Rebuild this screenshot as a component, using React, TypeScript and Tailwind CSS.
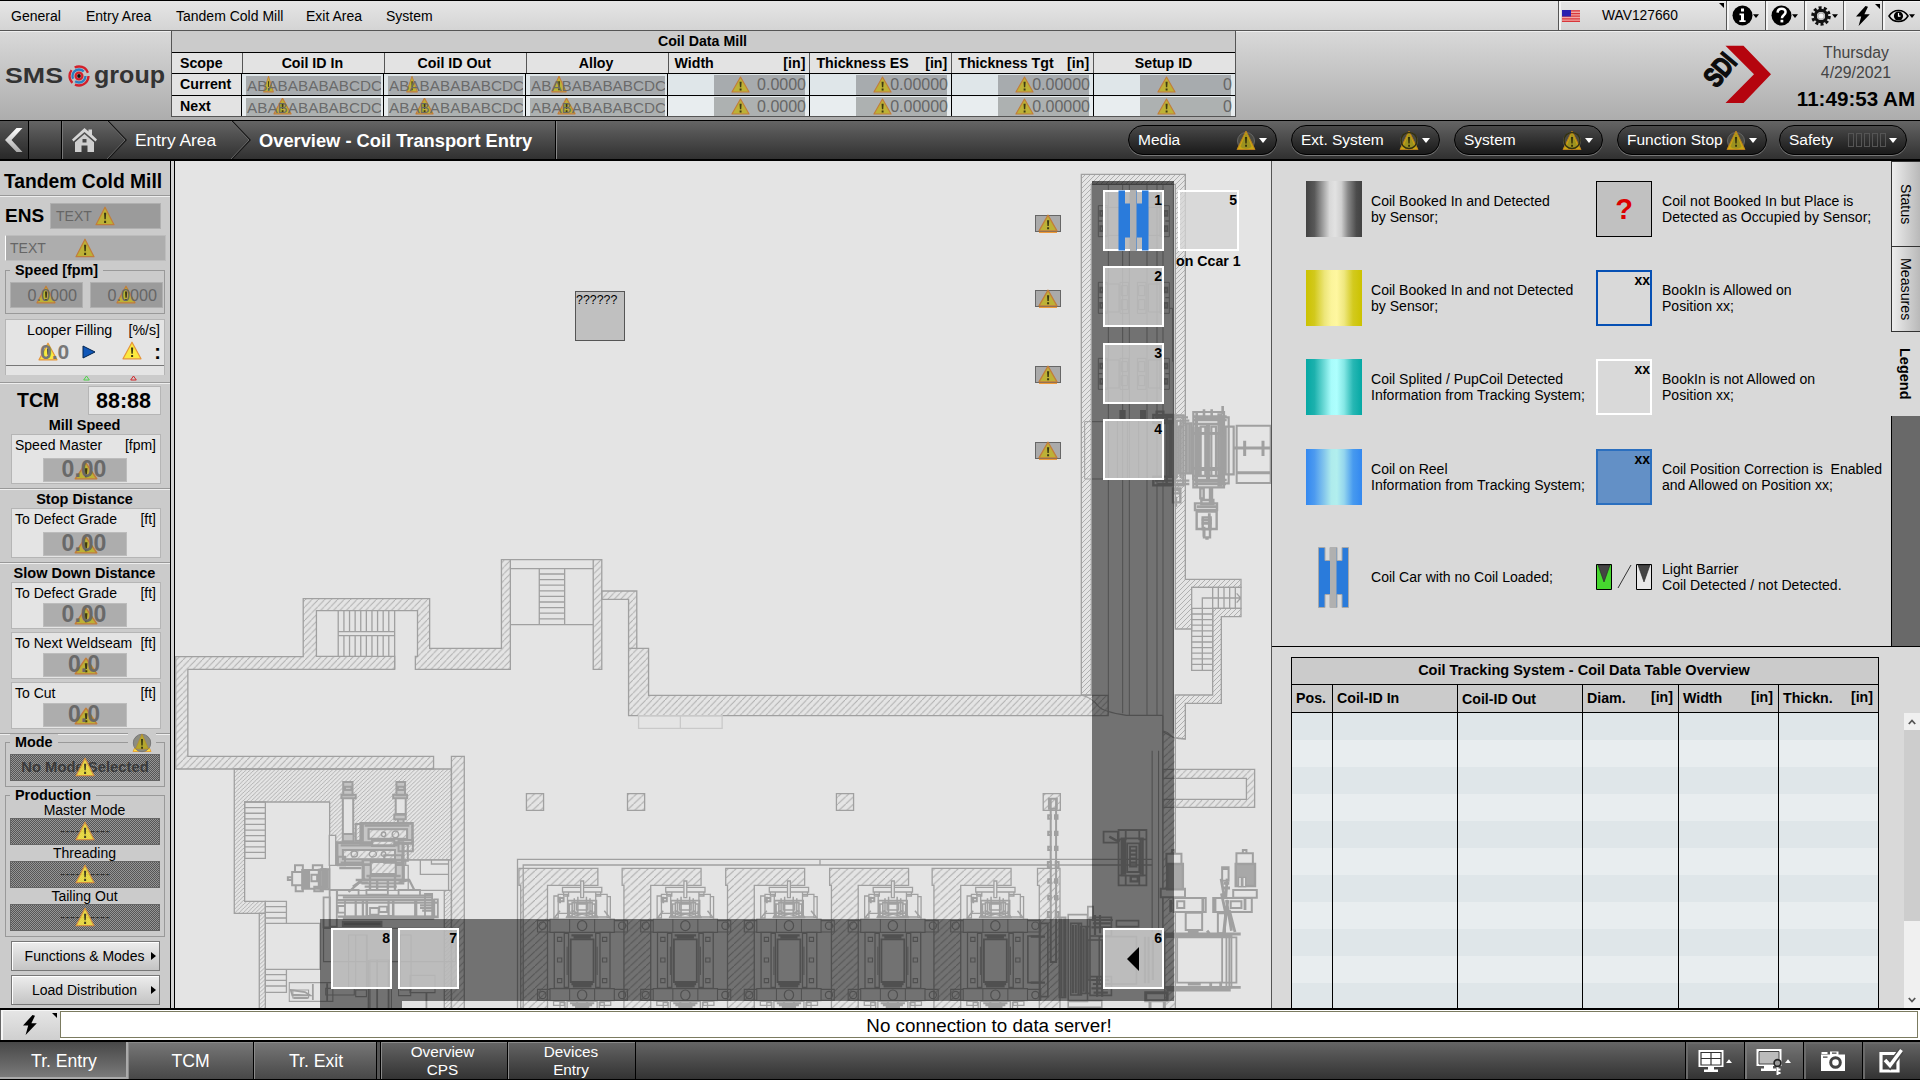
import type { ReactNode } from 'react';
import clsx from 'clsx';

/* ---------- small shared pieces ---------- */

type Tone = 'bright' | 'muted';

const toneFill: Record<Tone, string> = { bright: '#fbe93f', muted: '#bdb136' };
const toneStroke: Record<Tone, string> = { bright: '#e5953a', muted: '#c27d3a' };

function Warn({ w = 19, h = 19, tone = 'muted', className }: { w?: number; h?: number; tone?: Tone; className?: string }) {
  return (
    <svg width={w} height={h} viewBox="0 0 20 19" preserveAspectRatio="none" className={clsx('shrink-0', className)}>
      <path d="M10 1.2L19 17.8H1Z" fill={toneFill[tone]} stroke={toneStroke[tone]} strokeWidth="1.2" strokeLinejoin="round" />
      <path d="M9 6.5h2.2l-.4 6.2H9.4zM9.1 14h2v2.1h-2z" fill="#3d3a12" />
    </svg>
  );
}

/** Places a warning mark over or behind a value. */
function Over({ left, top, children }: { left: number; top: number; children: ReactNode }) {
  return (
    <span className="absolute" style={{ left, top }}>
      {children}
    </span>
  );
}

function Bolt({ className }: { className?: string }) {
  return (
    <svg width="18" height="22" viewBox="0 0 18 22" className={className}>
      <path d="M11.5 1L2 11.5h5.2L4.6 21 15.8 9.2h-5.4L14 1.8z" fill="#000" />
    </svg>
  );
}

function CornerMark({ className }: { className?: string }) {
  return (
    <svg width="5" height="5" viewBox="0 0 5 5" className={clsx('absolute', className)}>
      <path d="M0 0h5v5z" fill="#000" />
    </svg>
  );
}

function Caret({ up, small, color = '#fff' }: { up?: boolean; small?: boolean; color?: string }) {
  return (
    <svg width={small ? 6 : 8} height={small ? 4 : 5} viewBox="0 0 8 5" className="shrink-0">
      <path d={up ? 'M4 0L8 5H0z' : 'M0 0h8L4 5z'} fill={color} />
    </svg>
  );
}

/* ---------- top menu ---------- */

function ToolButton({ children, caret = true, last }: { children: ReactNode; caret?: boolean; last?: boolean }) {
  return (
    <div
      className={clsx(
        'relative flex h-full items-center justify-center border-l border-[#555] pr-px shadow-[inset_2px_1px_0_#f4f4f4]',
        last ? 'w-[38px]' : 'w-[39px]',
      )}
    >
      {children}
      {caret ? <Caret small color="#000" /> : <CornerMark className="right-[2px] top-[3px]" />}
    </div>
  );
}

function MenuBar() {
  return (
    <div className="flex h-[31px] shrink-0 items-center border-b border-t border-b-[#555] border-t-black bg-gradient-to-b from-[#e6e6e6] to-[#d4d4d4] text-[14px]">
      <div className="flex pt-px">
        <span className="ml-[11px] w-[75px]">General</span>
        <span className="w-[90px]">Entry Area</span>
        <span className="w-[130px]">Tandem Cold Mill</span>
        <span className="w-[80px]">Exit Area</span>
        <span>System</span>
      </div>
      <div className="ml-auto flex h-full">
        <div className="relative flex h-full w-[168px] items-center border-l border-[#555] shadow-[inset_2px_1px_0_#f4f4f4]">
          <svg width="18" height="12" viewBox="0 0 18 12" className="ml-[3px] mt-px">
            <rect width="18" height="12" fill="#f0a8a4" />
            <path d="M0 .8h18M0 3.6h18M0 6.2h18M0 8.8h18M0 11.4h18" stroke="#d8363a" strokeWidth="1.2" />
            <rect width="9" height="6.5" fill="#2a20b0" />
          </svg>
          <span className="ml-[22px] pt-px text-[13.800px]">WAV127660</span>
          <CornerMark className="right-[2px] top-[2px]" />
        </div>
        <ToolButton>
          <svg width="21" height="21" viewBox="0 0 21 21">
            <circle cx="10.5" cy="10.5" r="10" fill="#000" />
            <path d="M9 3.6h3v3H9zM7.5 8.4H12v6.8h1.6v1.8H7.4v-1.8H9v-5H7.5z" fill="#fff" />
          </svg>
        </ToolButton>
        <ToolButton>
          <svg width="21" height="21" viewBox="0 0 21 21">
            <circle cx="10.5" cy="10.5" r="10" fill="#000" />
            <path d="M6.6 7.6c.2-5 8-5 8-.6 0 2.900-3.700 3-3.700 6.200" fill="none" stroke="#fff" strokeWidth="2.500" />
            <rect x="9.500" y="14.800" width="2.800" height="2.600" fill="#fff" />
          </svg>
        </ToolButton>
        <ToolButton>
          <svg width="22" height="20" viewBox="0 0 22 20">
            <circle cx="11" cy="10" r="8.300" fill="none" stroke="#111" strokeWidth="3" strokeDasharray="3 2.210" />
            <circle cx="11" cy="10" r="5.700" fill="#f2f2f2" stroke="#111" strokeWidth="3.200" />
            <circle cx="11" cy="10" r="3.200" fill="none" stroke="#aaa" strokeWidth="1.200" />
          </svg>
        </ToolButton>
        <ToolButton caret={false}>
          <Bolt />
        </ToolButton>
        <ToolButton last>
          <svg width="21" height="14" viewBox="0 0 21 14">
            <path d="M1 7c4.500-7.400 14.500-7.400 19 0-4.500 7.400-14.500 7.400-19 0z" fill="#e6e6e6" stroke="#000" strokeWidth="1.500" />
            <circle cx="10.500" cy="7" r="4.600" fill="#000" />
            <path d="M10.500 4v3.200h2" stroke="#fff" strokeWidth="1.200" fill="none" />
          </svg>
        </ToolButton>
      </div>
    </div>
  );
}

/* ---------- header ---------- */

const codeText = 'ABABABABABCDCD';

function CodeCell({ even, mark, markW }: { even: boolean; mark: number; markW: number }) {
  return (
    <div className={clsx('flex w-[142px] border-r border-black pl-[4px] pt-[2px]', even ? 'bg-[#e8edef]' : 'bg-[#dfe6e9]')}>
      <div className={clsx('relative h-full w-[135px] overflow-hidden whitespace-nowrap pl-px', even ? 'bg-[#adb1b1]' : 'bg-[#a7abae]')}>
        <Over left={mark} top={-1}>
          <Warn w={markW} h={18} />
        </Over>
        <span className="relative text-[15.300px] leading-[19px] text-[#666]/95">{codeText}</span>
      </div>
    </div>
  );
}

function NumCell({ even, value, last }: { even: boolean; value: string; last?: boolean }) {
  return (
    <div className={clsx('flex justify-end pr-[4px] pt-px', last ? 'w-[141px]' : 'w-[142px] border-r border-black', even ? 'bg-[#e8edef]' : 'bg-[#dfe6e9]')}>
      <div className={clsx('relative h-full w-[91px] text-right', even ? 'bg-[#adb1b1]' : 'bg-[#a7abae]')}>
        <Over left={17} top={1}>
          <Warn w={19} h={17} />
        </Over>
        <span className="relative left-px text-[16px] leading-[20px] text-[#666]">{value}</span>
      </div>
    </div>
  );
}

const numericHeads: [string, string][] = [
  ['Width', '[in]'],
  ['Thickness ES', '[in]'],
  ['Thickness Tgt', '[in]'],
];

function MillTable() {
  const marks = [
    [[18, 11], [19, 12], [22, 16]],
    [[28, 19], [28, 19], [28, 19]],
  ];
  return (
    <div className="flex h-[86px] w-[1065px] flex-col border-x border-b border-[#555] text-[14.200px] font-bold">
      <div className="flex h-[21px] items-center justify-center bg-[#cbcbcb] pr-[2px]">Coil Data Mill</div>
      <div className="flex h-[22px] border-y border-black bg-[#e3e3e3] leading-[20px]">
        <div className="w-[71px] border-r border-[#555] pl-[8px]">Scope</div>
        {['Coil ID In', 'Coil ID Out', 'Alloy'].map((t) => (
          <div key={t} className="w-[142px] border-r border-[#555] pr-[2px] text-center">{t}</div>
        ))}
        {numericHeads.map(([t, u]) => (
          <div key={t} className="flex w-[142px] justify-between border-r border-[#555] pl-[6px] pr-[4px]">
            <span>{t}</span>
            <span>{u}</span>
          </div>
        ))}
        <div className="w-[141px] pr-[2px] text-center">Setup ID</div>
      </div>
      {['Current', 'Next'].map((name, r) => (
        <div key={name} className={clsx('flex', r === 0 ? 'h-[22px] border-b border-black' : 'h-[20px]')}>
          <div className="w-[71px] border-r border-black bg-[#e3e3e3] pl-[8px] leading-[20px]">{name}</div>
          <div className="flex font-normal">
            {marks[r].map(([x, w], i) => (
              <CodeCell key={i} even={r === 1} mark={x - 1} markW={w} />
            ))}
            <NumCell even={r === 1} value="0.0000" />
            <NumCell even={r === 1} value="0.00000" />
            <NumCell even={r === 1} value="0.00000" />
            <NumCell even={r === 1} value="0" last />
          </div>
        </div>
      ))}
    </div>
  );
}

function SmsLogo() {
  return (
    <svg width="171" height="89" viewBox="0 31 171 89" className="shrink-0">
      <text x="5" y="82.500" fontFamily="Liberation Sans" fontSize="22" fontWeight="bold" fill="#333" textLength="58" lengthAdjust="spacingAndGlyphs">SMS</text>
      <text x="94" y="82.500" fontFamily="Liberation Sans" fontSize="24" fontWeight="bold" fill="#333" textLength="71" lengthAdjust="spacingAndGlyphs">group</text>
      <g fill="none" strokeWidth="2.300">
        <circle cx="79" cy="76" r="9.500" stroke="#d3202b" strokeDasharray="19 3 14 4 16 4" />
        <circle cx="79" cy="76" r="6.500" stroke="#2b7fc0" strokeDasharray="14 3 18 6" />
        <circle cx="79" cy="76" r="3.400" stroke="#d3202b" />
      </g>
      <circle cx="79" cy="76" r="1.900" fill="#111" />
    </svg>
  );
}

function SdiLogo() {
  return (
    <svg width="90" height="89" viewBox="1695 31 90 89" className="mr-[9px] shrink-0">
      <path d="M1727.500 45.700h18L1773 74.300l-27.500 28.700h-18l28.500-28.700z" fill="#b5040e" />
      <g transform="translate(1721.500 69.500) rotate(-50) scale(.84 1.120)">
        <text x="0" y="9" textAnchor="middle" fontFamily="Liberation Sans" fontSize="25" fontWeight="bold" fill="#0c0c0c" stroke="#0c0c0c" strokeWidth="1.200" letterSpacing="-.5">SDI</text>
      </g>
    </svg>
  );
}

function Header() {
  return (
    <div className="flex h-[89px] shrink-0 bg-gradient-to-b from-[#d9d9d9] to-[#adadad] shadow-[inset_0_1px_0_#eee]">
      <SmsLogo />
      <MillTable />
      <div className="ml-auto flex">
        <SdiLogo />
        <div className="flex w-[128px] flex-col items-center pt-[12px] text-[#444]">
          <span className="text-[15.800px] leading-[20px]">Thursday</span>
          <span className="text-[15.800px] leading-[20px]">4/29/2021</span>
          <span className="mt-[3px] text-[20.600px] font-bold leading-[26px] text-black">11:49:53 AM</span>
        </div>
      </div>
    </div>
  );
}

/* ---------- navigation bar ---------- */

function RoundWarn({ ringed }: { ringed?: boolean }) {
  return (
    <svg width="20" height="21" viewBox="0 0 20 21" className="shrink-0">
      <circle cx="10" cy="11" r="8.500" fill="#4a4a42" stroke="#666" strokeWidth="1" />
      <path d="M10 1L19 19.500H1z" fill="#c9a512" stroke="#b87f1c" strokeWidth="1" />
      <path d="M10 3l5.500 13.500c-2 3-9 3-11 0z" fill="#9c9220" />
      {ringed && <circle cx="10" cy="10.500" r="8" fill="none" stroke="#33300f" strokeWidth="1.500" />}
      <path d="M9 7h2l-.3 6.500H9.300zM9.100 14.800h1.900v2H9.100z" fill="#33300a" />
    </svg>
  );
}

function Pill({ label, w, ringed, bars }: { label: string; w: number; ringed?: boolean; bars?: boolean }) {
  return (
    <div
      className="flex h-[30px] items-center rounded-full border border-black bg-gradient-to-b from-[#4a4a4a] to-[#1a1a1a] pl-[9px] text-[15.500px] text-white shadow-[0_1px_0_#777]"
      style={{ width: w }}
    >
      <span className="whitespace-nowrap">{label}</span>
      <div className="ml-auto mr-[9px] flex items-center gap-[3px]">
        {bars ? (
          <span className="flex gap-[2px]">
            {[0, 1, 2, 3, 4].map((i) => (
              <i key={i} className="h-[14px] w-[6px] border border-[#555]" />
            ))}
          </span>
        ) : (
          <RoundWarn ringed={ringed} />
        )}
        <Caret />
      </div>
    </div>
  );
}

function Chevron() {
  return (
    <svg width="20" height="38" viewBox="0 0 20 38" className="shrink-0">
      <path d="M1 0L19 19 1 38" fill="none" stroke="#161616" strokeWidth="1.400" />
      <path d="M0 0L18 19 0 38" fill="none" stroke="#777" strokeWidth=".8" />
    </svg>
  );
}

function NavBar() {
  return (
    <div className="flex h-[41px] shrink-0 items-center border-b-2 border-t border-black bg-gradient-to-b from-[#656565] to-[#313131] text-white">
      <div className="flex h-full w-[29px] items-center border-r border-black bg-black/15">
        <svg width="22" height="26" viewBox="0 0 22 26" className="ml-[3px]">
          <defs>
            <linearGradient id="arrow" x1="0" y1="0" x2="0" y2="1">
              <stop offset="0" stopColor="#fff" />
              <stop offset="1" stopColor="#aaa" />
            </linearGradient>
          </defs>
          <path d="M13.500 1h6L8.500 13l11 12h-6L2 13z" fill="url(#arrow)" />
        </svg>
      </div>
      <div className="h-full w-[33px] border-r border-black" />
      <div className="flex h-full w-[45px] items-center border-l border-[#777] pl-[9px]">
        <svg width="25" height="26" viewBox="0 0 25 26">
          <path d="M12.500 1L0 12.500l1.500 2L12.500 5l11 9.500 1.500-2-5-4.700V2.500h-3.500v2z" fill="#d6d6d6" />
          <path d="M3 15.300L12.500 7 22 15.300V25h-6.500v-6.500h-6V25H3zM10.500 12h4v3.500h-4z" fill="#cfcfcf" fillRule="evenodd" />
        </svg>
      </div>
      <Chevron />
      <span className="ml-[8px] w-[96px] pt-px text-[17.400px]">Entry Area</span>
      <Chevron />
      <span className="ml-[8px] w-[296px] pt-px text-[18.300px] font-bold">Overview - Coil Transport Entry</span>
      <div className="h-full w-[2px] border-l border-r border-l-black border-r-[#888]" />
      <div className="ml-auto mr-[13px] flex items-center gap-[14px]">
        <Pill label="Media" w={149} />
        <Pill label="Ext. System" w={149} ringed />
        <Pill label="System" w={149} ringed />
        <div className="flex gap-[12px]">
          <Pill label="Function Stop" w={150} />
          <Pill label="Safety" w={128} bars />
        </div>
      </div>
    </div>
  );
}

/* ---------- left sidebar ---------- */

function Rule({ className }: { className?: string }) {
  return <div className={clsx('h-[2px] shrink-0 border-b border-t border-b-[#eee] border-t-[#999]', className)} />;
}

function DataBox({ label, unit, value, tall }: { label: string; unit: string; value: string; tall?: boolean }) {
  return (
    <div className={clsx('ml-[11px] w-[150px] shrink-0 border border-[#b5b5b5] bg-[#e4e4e4]', tall ? 'h-[50px]' : 'h-[47px]')}>
      <div className="flex justify-between pl-[3px] pr-[4px] pt-[2px] text-[14px] leading-[16px]">
        <span>{label}</span>
        <span>{unit}</span>
      </div>
      <div className={clsx('relative ml-[31px] h-[24px] w-[84px] border border-[#bcbcbc] bg-[#adadad] text-center text-[23px] font-bold leading-[20px] text-[#666]', tall ? 'mt-[5px]' : 'mt-[2px]')}>
        <Over left={30} top={3}>
          <Warn w={24} h={18} className="block" />
        </Over>
        <span className="relative right-px opacity-95">{value}</span>
      </div>
    </div>
  );
}

function HatchField({ text, strong }: { text: string; strong?: boolean }) {
  return (
    <div className="relative ml-[4px] flex h-[27px] w-[150px] items-center justify-center border border-[#666] bg-[repeating-conic-gradient(#565656_0_25%,#959595_0_50%)] bg-[length:2px_2px]">
      <span className={clsx('whitespace-nowrap', strong ? 'text-[14.800px] font-bold text-[#3a3a3a]' : 'text-[15px] text-[#333]')}>{text}</span>
      <Over left={64} top={2}>
        <Warn w={20} h={20} tone="bright" className="opacity-85" />
      </Over>
    </div>
  );
}

function Group({ title, h, className, children }: { title: string; h: number; className?: string; children: ReactNode }) {
  return (
    <div className={clsx('relative ml-[5px] w-[160px] shrink-0 border border-[#999]', className)} style={{ height: h }}>
      <span className="absolute -top-[9px] left-[4px] bg-[#cbcbcb] px-[5px] text-[14.400px] font-bold leading-[17px]">{title}</span>
      {children}
    </div>
  );
}

function SmallValue() {
  return (
    <div className="relative h-[26px] w-[73px] border border-[#b0b0b0] bg-[#9b9b9b] pr-[5px] text-right text-[16.200px] leading-[24px] text-[#666]">
      <Over left={25} top={2}>
        <Warn w={20} h={19} className="block" />
      </Over>
      <span className="relative">0.0000</span>
    </div>
  );
}

function SideButton({ label, className }: { label: string; className?: string }) {
  return (
    <div className={clsx('relative ml-[11px] flex h-[30px] w-[149px] shrink-0 items-center justify-center border border-[#777] bg-gradient-to-b from-[#ededed] to-[#c4c4c4] pr-[2px] text-[14px] shadow-[inset_1px_1px_0_#fff]', className)}>
      {label}
      <svg width="5" height="8" viewBox="0 0 5 8" className="absolute right-[3px] top-[10px]">
        <path d="M0 0l5 4-5 4z" fill="#000" />
      </svg>
    </div>
  );
}

const sectionTitle = 'text-center text-[14.500px] font-bold pr-px';

function Sidebar() {
  return (
    <div className="flex w-[170px] shrink-0 flex-col overflow-hidden bg-[#cbcbcb]">
      <div className="h-[34px] shrink-0 whitespace-nowrap pl-[4px] text-[19.300px] font-bold leading-[42px]">Tandem Cold Mill</div>
      <Rule />
      <div className="mt-[6px] flex h-[26px] shrink-0 items-center">
        <span className="w-[45px] pl-[5px] text-[19px] font-bold leading-[24px]">ENS</span>
        <div className="relative ml-[5px] h-[26px] w-[111px] border border-[#b0b0b0] bg-[#9b9b9b] pl-[5px] text-[14px] leading-[24px] text-[#666]">
          TEXT
          <Over left={44} top={2}>
            <Warn w={20} h={20} className="block" />
          </Over>
        </div>
      </div>
      <div className="relative ml-[5px] mt-[6px] h-[26px] w-[161px] shrink-0 border border-[#bdbdbd] border-l-white bg-[#adadad] pl-[4px] text-[14px] leading-[24px] text-[#666]">
        TEXT
        <Over left={69} top={2}>
          <Warn w={20} h={20} className="block" />
        </Over>
      </div>
      <Group title="Speed [fpm]" h={44} className="mt-[9px]">
        <div className="flex gap-[7px] pl-[4px] pt-[11px]">
          <SmallValue />
          <SmallValue />
        </div>
      </Group>
      <div className="relative ml-[5px] mt-[5px] h-[56px] w-[160px] shrink-0 border border-b-0 border-[#b5b5b5] bg-[#e4e4e4]">
        <div className="flex justify-between pl-[21px] pr-[4px] pt-[2px] text-[14.200px] leading-[17px]">
          <span>Looper Filling</span>
          <span>[%/s]</span>
        </div>
        <div className="relative h-[27px] border-b border-[#777]">
          <Over left={32} top={3}>
            <Warn w={20} h={19} tone="bright" className="block" />
          </Over>
          <span className="absolute left-[34px] top-0 text-[21px] font-bold leading-[26px] text-[#777]">0.0</span>
          <svg width="14" height="14" viewBox="0 0 14 14" className="absolute left-[76px] top-[6px]">
            <path d="M1 1l12 6-12 6z" fill="#1057b8" stroke="#03254f" />
          </svg>
          <Over left={116} top={2}>
            <Warn w={20} h={19} tone="bright" className="block" />
          </Over>
          <span className="absolute right-[3px] top-0 text-[20px] font-bold leading-[26px]">:</span>
        </div>
      </div>
      <div className="flex h-[7px] shrink-0 pl-[83px]">
        <svg width="7" height="6" viewBox="0 0 7 6">
          <path d="M3.500 1L6.300 5H.7z" fill="none" stroke="#4fd24a" />
        </svg>
        <svg width="7" height="6" viewBox="0 0 7 6" className="ml-[40px]">
          <path d="M3.500 1L6.300 5H.7z" fill="none" stroke="#d2262a" />
        </svg>
      </div>
      <Rule />
      <div className="mt-[2px] flex h-[29px] shrink-0 items-center">
        <span className="w-[88px] pl-[17px] pt-px text-[19.500px] font-bold">TCM</span>
        <div className="flex h-[29px] w-[73px] items-center justify-center border border-[#b5b5b5] bg-[#e4e4e4] pr-[2px] pt-px text-[21.500px] font-bold">88:88</div>
      </div>
      <div className={clsx(sectionTitle, 'mt-px h-[18px] leading-[18px]')}>Mill Speed</div>
      <DataBox tall label="Speed Master" unit="[fpm]" value="0.00" />
      <Rule className="mt-[4px]" />
      <div className={clsx(sectionTitle, 'h-[18px] leading-[18px]')}>Stop Distance</div>
      <DataBox tall label="To Defect Grade" unit="[ft]" value="0.00" />
      <Rule className="mt-[4px]" />
      <div className={clsx(sectionTitle, 'h-[18px] leading-[18px]')}>Slow Down Distance</div>
      <DataBox label="To Defect Grade" unit="[ft]" value="0.00" />
      <div className="h-[3px] shrink-0" />
      <DataBox label="To Next Weldseam" unit="[ft]" value="0.0" />
      <div className="h-[3px] shrink-0" />
      <DataBox label="To Cut" unit="[ft]" value="0.0" />
      <Rule className="mt-[4px]" />
      <Group title="Mode" h={45} className="mt-[7px]">
        <span className="absolute -top-[10px] left-[122px] bg-[#cbcbcb] px-[4px]">
          <svg width="20" height="20" viewBox="0 0 20 20">
            <path d="M1 18.500L4 12h12l3 6.500z" fill="#ffe23c" stroke="#e5a53a" />
            <circle cx="10" cy="10" r="8.700" fill="#8c8c80" stroke="#777" />
            <path d="M10 1l6.500 15h-13z" fill="#b3a72c" stroke="#b98a28" strokeWidth=".7" />
            <path d="M9 6h2l-.3 6.500H9.300zM9.100 13.800h1.900v2H9.100z" fill="#3d3a12" />
          </svg>
        </span>
        <div className="pt-[11px]">
          <HatchField text="No Mode Selected" strong />
        </div>
      </Group>
      <Group title="Production" h={142} className="mt-[8px] text-center text-[14px]">
        <div className="h-[22px] pr-px pt-[6px] leading-[16px]">Master Mode</div>
        <HatchField text="----------" />
        <div className="h-[16px] pr-px leading-[16px]">Threading</div>
        <HatchField text="----------" />
        <div className="h-[16px] pr-px leading-[16px]">Tailing Out</div>
        <HatchField text="----------" />
      </Group>
      <SideButton label="Functions & Modes" className="mt-[4px]" />
      <SideButton label="Load Distribution" className="mt-[4px]" />
    </div>
  );
}

/* ---------- floor plan ---------- */

type Box = [number, number, number, number];
const boxes = (list: Box[]) => list.map(([x, y, w, h]) => `M${x} ${y}h${w}v${h}h${-w}z`).join('');
const rungs = (x: number, w: number, y0: number, y1: number, step: number) => {
  let d = '';
  for (let y = y0; y <= y1; y += step) d += `M${x} ${y}h${w}`;
  return d;
};
const posts = (y: number, h: number, x0: number, x1: number, step: number) => {
  let d = '';
  for (let x = x0; x <= x1; x += step) d += `M${x} ${y}v${h}`;
  return d;
};

const LINE = '#a0a0a0';
const BG = '#e4e4e4';

function Line({ d, fill = 'none', w = 1.3, stroke = LINE }: { d: string; fill?: string; w?: number; stroke?: string }) {
  return <path d={d} fill={fill} stroke={stroke} strokeWidth={w} vectorEffect="non-scaling-stroke" />;
}

/** One rolling stand, drawn around its own centre line. */
function Stand({ x }: { x: number }) {
  return (
    <g transform={`translate(${x} 420)`}>
      <Line d="M-177 565H44V616H-97V992H-172V616H-177Z" fill="url(#hatchWide)" />
      <Line d={boxes([[-79, 648, 12, 66], [-67, 643, 26, 57], [38, 643, 32, 68], [70, 650, 9, 62], [-55, 622, 110, 14], [-52, 636, 14, 12], [38, 636, 14, 12]])} />
      <Line d={boxes([[-40, 662, 80, 50], [-28, 668, 56, 34], [-16, 672, 32, 18], [-36, 672, 8, 36], [28, 672, 8, 36]])} w={1.6} />
      <Line d="M-30 692L30 712M30 692L-30 712M-40 700h80M-12 650v60M12 650v60M-22 655v50M22 655v50M-80 716l18-24M80 716L62 692M-45 714l12-20M45 714L33 694" w={1.5} />
      <Line d={boxes([[-4, 603, 8, 50]])} fill={BG} />
      <Line d="M-66 654h14v10h-14zM-62 650v20" w={2} />
      <Line d={boxes([[-90, 717, 180, 40], [-125, 722, 35, 34], [90, 722, 37, 34], [-90, 926, 180, 36], [-125, 928, 35, 33], [90, 928, 37, 33]])} w={1.1} />
      <Line d="M-35 717v40M35 717v40M-35 926v36M35 926v36" w={1} />
      {[737, 945].map((y) => (
        <g key={y} fill="none" stroke={LINE} strokeWidth="3.500">
          <ellipse cx="0" cy={y} rx="13" ry="15" />
          <ellipse cx="-111" cy={y} rx="10" ry="11" />
          <ellipse cx="112" cy={y} rx="10" ry="11" />
        </g>
      ))}
      <Line d={boxes([[-78, 757, 28, 168], [-50, 760, 12, 162], [50, 757, 28, 168], [38, 760, 12, 162]])} w={1.3} />
      <Line d={boxes([[-69, 772, 12, 12], [-69, 834, 12, 12], [-69, 896, 12, 12], [57, 772, 12, 12], [57, 834, 12, 12], [57, 896, 12, 12]])} w={1.1} />
      <Line d={boxes([[-32, 778, 64, 128]])} w={1.8} />
      <Line d="M-30 766h60M-24 773h48M-30 912h60M-26 919h52" w={2.4} />
      <Line d="M-42 800v85M42 800v85" w={1} />
      <Line d={boxes([[-80, 964, 30, 12], [50, 964, 30, 12], [-42, 964, 84, 22], [-62, 968, 14, 20], [48, 968, 14, 20]])} />
      <Line d="M-34 970h68M-28 976h56M-20 982h40M-14 964v26M14 964v26" w={2} />
    </g>
  );
}

/** Transfer car outline below a storage place. */
function CarFrame({ y }: { y: number }) {
  return (
    <g transform={`translate(0 ${y})`}>
      <Line w={1} d={boxes([[235, 0, 28, 93], [420, 0, 28, 93], [251, 5, 46, 84], [300, 0, 26, 93], [352, 0, 26, 93], [385, 5, 40, 84]])} />
      <Line d={boxes([[241, 16, 8, 14], [241, 62, 8, 14], [434, 16, 8, 14], [434, 62, 8, 14]])} w={2} />
      <Line d={boxes([[304, 10, 18, 30], [304, 52, 18, 30], [356, 10, 18, 30], [356, 52, 18, 30]])} w={1} />
      <Line d="M235 46h12M436 46h12" />
    </g>
  );
}

function FloorPlan() {
  return (
    <svg width="1096" height="847" viewBox="175 161 1096 847" className="absolute left-0 top-0">
      <defs>
        <pattern id="hatchWide" width="22" height="22" patternUnits="userSpaceOnUse">
          <path d="M-2 24L24-2" stroke="#a9a9a9" strokeWidth="2.800" />
        </pattern>
        <pattern id="hatch" width="18" height="20" patternUnits="userSpaceOnUse">
          <path d="M-2 22L20-2" stroke="#acacac" strokeWidth="2.800" />
        </pattern>
        <pattern id="hatchFine" width="11.500" height="12" patternUnits="userSpaceOnUse">
          <path d="M-2 14L13.500-2" stroke="#aaaaaa" strokeWidth="2.300" />
        </pattern>
        <pattern id="hatchWall" width="15" height="15" patternUnits="userSpaceOnUse">
          <path d="M-2 17L17-2" stroke="#acacac" strokeWidth="2.800" />
        </pattern>
      </defs>

      <g transform="translate(170 540) scale(.357143 .333333)">
        {/* west building */}
        <Line d="M16 350H373V176H727V325H928V59H953V388H687V349H693V212H410V349H629V388H50V649H738V687H16Z" fill="url(#hatch)" />
        <Line d={`M953 59H1185M953 86H1185M953 254H1185${boxes([[1034, 86, 71, 168]])}${rungs(1034, 71, 102, 240, 16.8)}`} />
        <Line d={boxes([[1185, 59, 24, 329]])} fill="url(#hatch)" />
        <Line d="M1209 153H1307V325H1340V466H2627V527H1284V178H1209Z" fill="url(#hatch)" />
        <Line d="M1284 325H1307" />
        <Line d={boxes([[1312, 527, 234, 38]]) + 'M1429 527v38'} stroke="#c9c9c9" />
        <Line d={`M471 212V349M629 212V388M471 275H629M471 287H629${posts(212, 62, 487, 625, 15.7)}${posts(287, 62, 487, 625, 15.7)}`} />

        {/* pump room */}
        <Line d="M180 687H788V960H463V950H447V786H209V1084H267V1120H180Z" fill="url(#hatchFine)" />
        <Line d={boxes([[788, 649, 36, 760]])} fill="url(#hatch)" />
        <Line d={boxes([[768, 1051, 20, 356], [250, 1120, 17, 290]])} fill="url(#hatchFine)" />
        <Line d={`${boxes([[209, 786, 58, 169], [267, 1084, 59, 66], [267, 1150, 153, 138], [267, 1288, 59, 69]])}${rungs(209, 58, 803, 950, 16.8)}${rungs(267, 59, 1100, 1145, 17)}${rungs(267, 59, 1304, 1350, 17)}`} />
        <Line d={boxes([[660, 960, 120, 91], [701, 960, 79, 43], [732, 960, 48, 12]])} fill={BG} />
        <Line d={boxes([[446, 886, 18, 90], [447, 976, 220, 75]])} fill={BG} />
        <Line d={boxes([[484, 770, 29, 115], [632, 770, 28, 52]])} fill={BG} w={2} />
        <Line d={boxes([[485, 726, 26, 40], [634, 726, 24, 40], [480, 764, 40, 11], [625, 764, 39, 11], [490, 740, 18, 10], [638, 740, 18, 10], [484, 882, 30, 22], [628, 824, 32, 14], [638, 838, 16, 12]])} w={2} fill="#c4c4c4" />
        <Line d={boxes([[534, 850, 145, 60], [468, 908, 184, 66], [540, 960, 114, 60]])} fill="#c6c6c6" w={2.6} />
        <Line d={boxes([[556, 868, 108, 28], [484, 930, 146, 28], [566, 902, 62, 16], [562, 966, 70, 36]])} fill={BG} w={2} />
        <Line d={boxes([[556, 868, 108, 28], [484, 930, 146, 28], [566, 902, 62, 16], [562, 966, 70, 36]])} fill="url(#hatch)" w={1.4} />
        <Line d={boxes([[640, 900, 40, 34], [520, 852, 20, 50], [470, 950, 20, 26], [600, 946, 50, 22], [654, 912, 12, 50]])} w={2} />
        <Line d="M545 857h125M478 916h160M478 968h60M542 975v45M652 975v45M550 1008h96M520 1020h150M536 1030h120M545 1040h90M560 1012v40M630 1012v40M580 1020v28M610 1020v28M474 984h62M512 1040l34-26" w={2.4} />
        <g fill="none" stroke={LINE} strokeWidth="4">
          <ellipse cx="598" cy="883" rx="6" ry="7" />
          <ellipse cx="631" cy="883" rx="9" ry="10" />
          <ellipse cx="516" cy="942" rx="9" ry="9" />
          <ellipse cx="568" cy="942" rx="10" ry="9" />
          <ellipse cx="598" cy="942" rx="6" ry="7" />
        </g>
        <Line d={boxes([[342, 996, 28, 40], [370, 990, 50, 56], [350, 976, 22, 20], [400, 976, 26, 14], [352, 1036, 20, 18], [404, 1040, 24, 14], [396, 1004, 16, 20], [422, 988, 24, 60], [330, 1012, 12, 8]])} w={2} />
        <Line d="M376 992v52M382 992v52M388 992v52M418 986v62M428 984v66M434 984v66M440 986v60" w={3} />
        <Line d={boxes([[468, 1066, 266, 14], [430, 1072, 18, 90], [447, 1050, 20, 110], [468, 1050, 60, 16], [550, 1050, 60, 14], [640, 1050, 60, 16], [490, 1080, 60, 50], [552, 1080, 72, 48], [560, 1104, 24, 20], [586, 1100, 22, 16], [626, 1080, 60, 50], [690, 1080, 46, 50], [714, 1062, 20, 74], [470, 1098, 20, 20], [740, 1078, 10, 54]])} w={1.8} />
        <Line d="M470 1130H748M484 1136H740M468 1088h280M520 1080v56M540 1080v50M612 1080v56M700 1096h40M700 1104h40M706 1112h34M484 1072h250M500 1056l30-28h24M640 1028l30-8 14 30" w={2.200} />
        <Line d={boxes([[484, 1145, 108, 13]])} fill="#8a8a8a" w={2} />
        <Line d={boxes([[430, 1165, 370, 100], [500, 1185, 50, 160], [520, 1185, 32, 160], [645, 1185, 30, 165], [560, 1260, 60, 150], [672, 1306, 70, 52], [640, 1345, 34, 22], [520, 1350, 30, 20], [334, 1328, 122, 56], [344, 1350, 44, 24], [436, 1345, 80, 20]])} w={1.1} />
        <Line d="M338 1350l40 6 14 10-50-2zM340 1366h50M346 1374h40M400 1332v48M440 1330v54M718 1358v50M556 1260v150M580 1260v150M612 1260v150" w={1.8} />

        {/* columns */}
        <Line d={boxes([[998, 761, 48, 50], [1281, 761, 48, 50], [1866, 761, 48, 50], [2445, 761, 48, 50]])} fill="url(#hatchWide)" />

        {/* mill pit */}
        <Line d="M973 1410V958H2750M989 1410V975H2750M1820 958v17" />
        {[1154, 1443, 1733, 2024, 2311].map((x) => (
          <Stand key={x} x={x} />
        ))}

        <g transform="translate(1540 420)">
          <Line d="M889 565H952V990H894V616H889Z" fill="url(#hatchWide)" />
          <Line d={boxes([[926, 356, 15, 490], [921, 356, 22, 30]])} w={2} />
          <Line d={boxes([[919, 406, 7, 10], [938, 406, 7, 10], [919, 455, 7, 10], [938, 455, 7, 10], [919, 500, 7, 10], [938, 500, 7, 10], [918, 546, 8, 16], [940, 546, 8, 16], [919, 598, 7, 10], [938, 598, 7, 10], [919, 648, 7, 10], [938, 648, 7, 10], [918, 696, 8, 16], [940, 696, 8, 16]])} w={2} />
          {/* entry side equipment */}
          <Line d={boxes([[862, 768, 34, 140], [896, 730, 22, 220], [950, 712, 18, 240], [975, 704, 54, 260], [982, 730, 30, 215], [1010, 740, 26, 200], [1030, 680, 15, 36], [1036, 712, 60, 56], [1036, 890, 60, 56], [975, 962, 94, 20], [1110, 722, 62, 18], [1062, 770, 104, 142], [1030, 780, 40, 120]])} w={1.6} />
          <Line d="M956 715v235M964 715v235M988 735v205M996 735v205M1004 730v215M1018 745v190M1026 740v200M1040 720h60M1044 730h50M1040 742h56M1050 705v60M1064 705v55M1040 900h50M1044 912h50M1040 925h46M1046 938h40M1056 890v60M1070 890v60M1190 770v140M1200 770v140M1212 780v120M870 770h40M870 908h40" w={2.200} />
          {/* transfer unit */}
          <Line d={boxes([[1074, 455, 40, 33], [1116, 450, 78, 166], [1124, 475, 60, 112], [1140, 490, 34, 86], [1148, 500, 18, 60], [1116, 450, 20, 28], [1174, 450, 20, 28], [1116, 586, 20, 30], [1174, 586, 20, 30]])} w={1.8} />
          <Line d="M1128 480v104M1134 480v104M1178 480v104M1148 512h18M1148 524h18M1148 536h18M1148 548h18M1150 590h20v14h-20zM1090 470l20 12h10" w={2.400} />
          <Line w={1.1} d="M1210 212V757M1228 212V757M1240 107V757M1010 45q30 6 50 34 12 16 78 27H1240M1240 152q14 4 20 12 8 14 44 13" />
          <Line d="M1240 155L1275 175V992H1245V757H1240Z" fill="url(#hatchWide)" />
          <Line d="M1240 268H1497V382H1240V358H1474V295H1240Z" fill="url(#hatch)" />
          {/* exit reel drives */}
          <Line d={boxes([[1250, 521, 42, 32], [1446, 520, 46, 32], [1464, 510, 10, 10], [1266, 510, 8, 10], [1234, 626, 68, 26], [1437, 630, 66, 23], [1270, 654, 90, 42], [1280, 664, 20, 20], [1381, 654, 108, 42], [1430, 664, 30, 20], [1304, 698, 46, 52], [1394, 700, 20, 60], [1406, 562, 18, 40]])} w={2} fill={BG} />
          <Line d={boxes([[1252, 552, 44, 76], [1444, 552, 54, 66]])} fill="#a8a8a8" w={2.400} />
          <Line d={boxes([[1452, 592, 8, 28], [1464, 592, 8, 28]])} fill={BG} />
          <Line d="M1405 566h18M1403 596l10 60M1420 596l-4 60M1404 640l12 60-6 60M1422 660l-10 90M1426 690l16 66M1418 660l14 92M1410 610h16M1404 624h24M1262 660v36M1352 656v38M1386 656v38M1470 656v34" w={2.800} />
          <Line d={boxes([[1244, 762, 182, 160], [1280, 772, 126, 136], [1406, 772, 40, 136], [1418, 762, 14, 160]])} w={1.800} />
          <Line d="M1240 762h218M1244 770h190M1240 922h218M1250 930h180M1310 755h30M1364 752l10 14M1310 912h36M1374 908v26M1402 905v28" w={2.800} />
          <Line d={boxes([[1192, 938, 60, 24], [1204, 962, 40, 28]])} w={3} />
        </g>
      </g>

      {/* transport aisle */}
      <g transform="translate(1020 160) scale(.333333)">
        <Line d="M184 43H496V1258H663V1282H515V1407H466V73H214V1605H184Z" fill="url(#hatchWall)" />
        <Line d="M578 1345H663V1370H604V1630H496V1737L466 1733V1605H578Z" fill="url(#hatchWall)" />
        <Line d={`M515 1282H663V1345H515V1531H578V1345${rungs(515, 63, 1362, 1520, 16.8)}${posts(1282, 63, 578, 650, 17)}M547 1531V1314H660M650 1300l12 14-12 14`} />
        <Line w={1} d="M265 73V1660M308 73V1660M328 73V1665M381 73V1665M411 73V1665M429 73V1720M460 73V1720M448 445h10v160" />
        {[137, 367, 595].map((y) => (
          <CarFrame key={y} y={y} />
        ))}
        {/* uncoiler */}
        <Line d={boxes([[194, 785, 56, 172], [292, 780, 30, 175], [356, 780, 26, 175]])} w={1} />
        <Line d={boxes([[300, 752, 15, 26], [362, 752, 14, 26]])} fill="#a0a0a0" />
        <Line d={boxes([[400, 765, 60, 24], [400, 950, 60, 26], [440, 770, 24, 205], [464, 766, 26, 210], [490, 790, 24, 150], [476, 800, 14, 140], [459, 985, 22, 42], [410, 755, 20, 12]])} w={2.400} />
        <Line d="M448 785v170M455 785v170M470 785v170M482 785v170M500 790v150M508 790v150M404 772h100M412 782h96M404 962h104M412 972h96M462 990h18M462 1000h18M468 1010v30" w={2.400} />
        <Line d={boxes([[520, 756, 92, 226], [528, 775, 76, 190], [542, 800, 14, 148], [574, 800, 14, 148], [610, 772, 16, 198], [617, 800, 24, 143], [540, 820, 50, 110]])} w={2.200} />
        <Line d="M520 770h100M520 780h100M520 792h90M520 820h90M520 925h90M520 948h90M520 960h100M520 972h98M530 756v226M536 800v148M562 790v170M566 790v170M596 760v220M604 760v220M552 748v20M575 748v20M608 738v24M520 800v160M614 830v90" w={2.600} />
        <Line d={boxes([[525, 1030, 66, 20], [530, 1055, 60, 52], [548, 1072, 24, 36], [552, 1108, 18, 24], [541, 985, 10, 30], [570, 985, 6, 42], [544, 1020, 36, 12]])} w={2.400} />
        <Line d="M545 1080h30M545 1090h30M530 1040h60M552 1100v30M568 1060v50M556 1135h10" w={2.800} />
        <Line d={boxes([[650, 797, 102, 172]])} w={2} />
        <Line d="M641 864H752M650 938H752M674 842v46M729 842v46" w={3} />
      </g>

      <path d="M1092 181h82v820h-82zM320 919h772v82H402v7h-82z" fill="#000" fillOpacity=".5" />
      <path d="M1092 181h82v4h-82z" fill="#000" fillOpacity=".2" />
    </svg>
  );
}

function CoilCar({ outlined }: { outlined?: boolean }) {
  return (
    <svg width="31" height="61" viewBox="0 0 31 61">
      <path d="M.5.500h6.500V13.500h5V.500h7V13.500h5V.500h6.500v60h-6.500V47.500h-5v13h-7v-13H7v13H.500z" fill="#2a7bdb" stroke={outlined ? '#a8a8a8' : 'none'} />
      <path d="M12 0h6.500v61H12z" fill="#b0b0b0" />
    </svg>
  );
}

interface Place {
  id: string;
  x: number;
  y: number;
}

const places: Place[] = [
  { id: '1', x: 1103, y: 190 },
  { id: '2', x: 1103, y: 266 },
  { id: '3', x: 1103, y: 343 },
  { id: '4', x: 1103, y: 419 },
  { id: '5', x: 1178, y: 190 },
  { id: '6', x: 1103, y: 928 },
  { id: '7', x: 398, y: 928 },
  { id: '8', x: 331, y: 928 },
];

function PlantView() {
  return (
    <div className="relative w-[1096px] shrink-0 overflow-hidden bg-[#e4e4e4]">
      <FloorPlan />
      {places.map((p) => (
        <div
          key={p.id}
          className="absolute h-[61px] w-[61px] border-2 border-white bg-[#d6d6d6]/75"
          style={{ left: p.x - 175, top: p.y - 161 }}
        >
          {p.id === '1' && (
            <div className="absolute -top-[2px] left-[13px]">
              <CoilCar />
            </div>
          )}
          {p.id === '6' && (
            <svg width="12" height="24" viewBox="0 0 12 24" className="absolute left-[22px] top-[17px]">
              <path d="M12 0v24L0 12z" fill="#000" />
            </svg>
          )}
          <span className="absolute right-0 top-0 text-[14px] font-bold leading-[16px]">{p.id}</span>
        </div>
      ))}
      <span className="absolute left-[1001px] top-[92px] whitespace-nowrap text-[14.200px] font-bold leading-[16px]">on Ccar 1</span>
      {[215, 290, 366, 442].map((y) => (
        <div key={y} className="absolute left-[860px] h-[17px] w-[26px] border border-[#666] bg-[#aaa]" style={{ top: y - 161 }}>
          <Warn w={20} h={18} className="absolute -top-[2px] left-[2px]" />
          <i className="absolute -bottom-[2px] left-[3px] h-px w-[18px] bg-[#ee9a38]" />
        </div>
      ))}
      <div className="absolute left-[400px] top-[130px] h-[50px] w-[50px] border border-[#555] bg-[#c0c0c0] text-[12.400px] leading-[16px]">??????</div>
    </div>
  );
}

/* ---------- right panels ---------- */

const coilFill = {
  gray: 'bg-[linear-gradient(90deg,#424242,#585858_15%,#a8a8a8_32%,#d8d8d8_42%,#e2e2e2_52%,#d0d0d0_63%,#888_75%,#4c4c4c_90%,#424242)]',
  yellow: 'bg-[linear-gradient(90deg,#ccc200,#d2c91c_15%,#ede679_33%,#fbf49a_45%,#fff7a0_55%,#efe880_68%,#d3ca1e_84%,#ccc200)]',
  teal: 'bg-[linear-gradient(90deg,#05a8a4,#1cb1ad_15%,#70dcd9_33%,#a8fcfb_45%,#aefffe_55%,#86e8e6_68%,#27b7b4_84%,#05a8a4)]',
  blue: 'bg-[linear-gradient(90deg,#3388f0,#4c9af0_15%,#86c8ec_33%,#aeebec_45%,#b2efee_55%,#94d6ee_68%,#479aef_84%,#3388f0)]',
};

function Swatch({ className, children }: { className: string; children?: ReactNode }) {
  return <div className={clsx('relative h-[56px] w-[56px] shrink-0', className)}>{children}</div>;
}

const xx = <span className="absolute right-0 top-0 text-[14px] font-bold leading-[16px]">xx</span>;

function LegendRow({ h, left, leftText, right, rightText }: { h: number; left: ReactNode; leftText: string[]; right: ReactNode; rightText: string[] }) {
  return (
    <div className="flex shrink-0 items-center pl-[34px] text-[14.050px] leading-[16px]" style={{ height: h }}>
      <div className="flex w-[56px] justify-center">{left}</div>
      <div className="ml-[9px] w-[225px] whitespace-pre">
        {leftText.map((t) => (
          <div key={t}>{t}</div>
        ))}
      </div>
      <div className="w-[56px]">{right}</div>
      <div className="ml-[10px] whitespace-pre">
        {rightText.map((t) => (
          <div key={t}>{t}</div>
        ))}
      </div>
    </div>
  );
}

function Legend() {
  return (
    <div className="flex w-[619px] flex-col bg-[#d9d9d9] pt-[3px]">
      <LegendRow
        h={89}
        left={<Swatch className={coilFill.gray} />}
        leftText={['Coil Booked In and Detected', 'by Sensor;']}
        right={
          <Swatch className="flex items-center justify-center border border-black bg-[#c1c1c1]">
            <span className="text-[29px] font-bold text-[#dc0000]">?</span>
          </Swatch>
        }
        rightText={['Coil not Booked In but Place is', 'Detected as Occupied by Sensor;']}
      />
      <LegendRow
        h={89}
        left={<Swatch className={coilFill.yellow} />}
        leftText={['Coil Booked In and not Detected', 'by Sensor;']}
        right={<Swatch className="border-2 border-[#0650b4]">{xx}</Swatch>}
        rightText={['BookIn is Allowed on', 'Position xx;']}
      />
      <LegendRow
        h={89}
        left={<Swatch className={coilFill.teal} />}
        leftText={['Coil Splited / PupCoil Detected', 'Information from Tracking System;']}
        right={<Swatch className="border-2 border-white">{xx}</Swatch>}
        rightText={['BookIn is not Allowed on', 'Position xx;']}
      />
      <LegendRow
        h={91}
        left={<Swatch className={coilFill.blue} />}
        leftText={['Coil on Reel', 'Information from Tracking System;']}
        right={<Swatch className="border-2 border-[#2b6fbf] bg-[#6390c6]">{xx}</Swatch>}
        rightText={['Coil Position Correction is  Enabled', 'and Allowed on Position xx;']}
      />
      <div className="h-[9px]" />
      <LegendRow
        h={92}
        left={
          <div className="pr-[2px]">
            <CoilCar outlined />
          </div>
        }
        leftText={['Coil Car with no Coil Loaded;']}
        right={
          <svg width="56" height="26" viewBox="0 0 56 26">
            <path d="M.5.500h15v25H.500z" fill="#46d72f" stroke="#000" />
            <path d="M2 1h12L8 18z" fill="#444" stroke="#222" strokeWidth=".6" />
            <path d="M22 24L35 1" stroke="#333" />
            <path d="M40.500.500h15v25h-15z" fill="#e8e8e8" stroke="#000" />
            <path d="M42 1h12l-6 17z" fill="#444" stroke="#222" strokeWidth=".6" />
          </svg>
        }
        rightText={['Light Barrier', 'Coil Detected / not Detected.']}
      />
    </div>
  );
}

function Tabs() {
  const tab = 'flex w-[29px] items-center justify-center border-b border-l border-[#333] bg-gradient-to-r from-[#ededed] to-[#b9b9b9] pr-[2px] text-[14.200px]';
  return (
    <div className="flex w-[29px] flex-col">
      <div className={clsx(tab, 'h-[86px] border-t')}>
        <span className="[writing-mode:vertical-rl]">Status</span>
      </div>
      <div className={clsx(tab, 'h-[85px]')}>
        <span className="[writing-mode:vertical-rl]">Measures</span>
      </div>
      <div className="flex h-[84px] items-center justify-center bg-[#d9d9d9] pr-[2px] text-[14.500px] font-bold">
        <span className="[writing-mode:vertical-rl]">Legend</span>
      </div>
      <div className="flex-1 border-l border-black bg-[#696969]" />
    </div>
  );
}

const tableCols: { w: number; name: string; unit?: string }[] = [
  { w: 41, name: 'Pos.' },
  { w: 125, name: 'Coil-ID In' },
  { w: 125, name: 'Coil-ID Out' },
  { w: 96, name: 'Diam.', unit: '[in]' },
  { w: 100, name: 'Width', unit: '[in]' },
  { w: 99, name: 'Thickn.', unit: '[in]' },
];

function CoilTable() {
  return (
    <div className="flex flex-1 overflow-hidden bg-[#d9d9d9] pt-[10px]">
      <div className="ml-[19px] flex w-[588px] flex-col border-x border-t border-black text-[14.200px] font-bold">
        <div className="flex h-[27px] shrink-0 items-center justify-center border-b border-black bg-[#cbcbcb] pb-px pr-[2px] text-[14.500px]">
          Coil Tracking System - Coil Data Table Overview
        </div>
        <div className="flex h-[28px] shrink-0 border-b border-black bg-[#cbcbcb]">
          {tableCols.map((c, i) => (
            <div key={c.name} className={clsx('flex items-center justify-between pl-[4px] pr-[5px]', i < 5 && 'border-r border-black', i === 2 && 'pt-[2px]')} style={{ width: c.w }}>
              <span>{c.name}</span>
              {c.unit && <span className="pb-[2px]">{c.unit}</span>}
            </div>
          ))}
        </div>
        {Array.from({ length: 11 }, (_, r) => (
          <div key={r} className={clsx('flex h-[27px] shrink-0', r % 2 ? 'bg-[#e8edef]' : 'bg-[#dfe6e9]')}>
            {tableCols.map((c, i) => (
              <div key={c.name} className={clsx(i < 5 && 'border-r border-black')} style={{ width: c.w }} />
            ))}
          </div>
        ))}
      </div>
      <div className="ml-auto mt-[56px] flex w-[16px] flex-col bg-[#f0f0f0]">
        <div className="flex h-[17px] items-center justify-center">
          <svg width="8" height="6" viewBox="0 0 8 6"><path d="M.8 5L4 1.500 7.200 5" fill="none" stroke="#555" strokeWidth="1.800" /></svg>
        </div>
        <div className="h-[191px] bg-[#cdcdcd]" />
        <div className="mt-auto flex h-[17px] items-center justify-center">
          <svg width="8" height="6" viewBox="0 0 8 6"><path d="M.8 1L4 4.500 7.200 1" fill="none" stroke="#555" strokeWidth="1.800" /></svg>
        </div>
      </div>
    </div>
  );
}

/* ---------- bottom ---------- */

function MessageBar() {
  return (
    <div className="flex h-[32px] shrink-0 border-t-2 border-black bg-white">
      <div className="relative flex w-[60px] items-center justify-center border-l border-[#666] bg-gradient-to-b from-[#e6e6e6] to-[#cfcfcf] pr-px shadow-[inset_2px_1px_0_#f6f6f6]">
        <Bolt />
        <CornerMark className="right-[3px] top-[3px]" />
      </div>
      <div className="mb-[2px] mr-[2px] mt-px flex flex-1 items-center justify-center border border-[#7b7b60] bg-white pt-[2px] text-[18.800px] leading-[24px]">
        No connection to data server!
      </div>
    </div>
  );
}

const bottomTab = 'flex h-full items-center justify-center text-center text-white border-r border-black shadow-[inset_1px_1px_0_#8a8a8a]';

function BottomBar() {
  return (
    <div className="flex h-[40px] shrink-0 border-b border-t-2 border-black bg-gradient-to-b from-[#656565] to-[#333]">
      <div className="flex h-full w-[128px] items-center justify-center border-b-2 border-r-2 border-b-[#aaa] border-r-[#aaa] bg-gradient-to-b from-[#484848] to-[#7a7a7a] pl-[2px] pt-[3px] text-[17.600px] text-white">Tr. Entry</div>
      <div className={clsx(bottomTab, 'w-[126px] bg-gradient-to-b from-[#787878] to-[#484848] pt-[2px] text-[17.600px]')}>TCM</div>
      <div className={clsx(bottomTab, 'w-[123px] bg-gradient-to-b from-[#787878] to-[#484848] pl-[2px] pt-[2px] text-[17.600px]')}>Tr. Exit</div>
      <div className="w-[4px] border-r border-black bg-[#555]" />
      <div className={clsx(bottomTab, 'w-[127px] pr-[3px] text-[15.300px] leading-[18px]')}>Overview<br />CPS</div>
      <div className={clsx(bottomTab, 'w-[128px] pr-px text-[15.300px] leading-[18px]')}>Devices<br />Entry</div>
      <div className="ml-auto flex">
        <div className="flex w-[59px] items-center justify-center gap-[2px] border-l border-black pr-px shadow-[inset_2px_2px_0_#6a6a6a]">
          <svg width="26" height="24" viewBox="0 0 26 24">
            <path d="M.5 1h25v17h-25zM10 18h6v2.500h4V23H6v-2.500h4z" fill="#fff" />
            <path d="M3 3.500h20v12.500H3zM13 3.500V16M3 9.500h20" fill="none" stroke="#333" strokeWidth="1.200" />
          </svg>
          <Caret up small />
        </div>
        <div className="flex w-[59px] items-center justify-center gap-[2px] border-l border-black bg-white/10 pr-px shadow-[inset_2px_2px_0_#777]">
          <svg width="27" height="30" viewBox="0 0 27 30">
            <path d="M.5 3h25v17h-25zM8 20h9v2.500h3V25H5v-2.500h3z" fill="#fff" />
            <path d="M3 5.500h20v12.500H3z" fill="#bbb" stroke="#444" />
            <path d="M21.500 20v9M21.500 23.500h3M21.500 27h3" stroke="#fff" strokeWidth="2" />
            <circle cx="21.500" cy="17" r="3.400" fill="#999" stroke="#222" strokeWidth="1.600" />
          </svg>
          <Caret up small />
        </div>
        <div className="flex w-[59px] items-center justify-center border-l border-black shadow-[inset_2px_2px_0_#6a6a6a]">
          <svg width="26" height="22" viewBox="0 0 26 22">
            <path d="M1 4.500h9V1.500h8.500v3H25V21H1zM1.500 2h6v2h-6z" fill="#fff" />
            <path d="M12 2.500h4.500v1.200H12zM3 6.500h4.500v1.200H3z" fill="#444" />
            <circle cx="15.500" cy="12.500" r="4.800" fill="none" stroke="#444" strokeWidth="3" />
          </svg>
        </div>
        <div className="flex w-[58px] items-center justify-center border-l border-black pr-px shadow-[inset_2px_2px_0_#6a6a6a]">
          <svg width="24" height="26" viewBox="0 0 24 26">
            <path d="M2 5.500h17v17.500H2z" fill="none" stroke="#fff" strokeWidth="3.200" />
            <path d="M6 12.500l5 5L22.500 2.500" fill="none" stroke="#4a4a4a" strokeWidth="6.500" />
            <path d="M6 12l5 5.500L22.500 2" fill="none" stroke="#fff" strokeWidth="3.500" />
          </svg>
        </div>
      </div>
    </div>
  );
}

export default function App() {
  return (
    <div className="flex h-[1080px] w-[1920px] flex-col overflow-hidden bg-[#cbcbcb] font-['Liberation_Sans',Arial,sans-serif] text-black">
      <MenuBar />
      <Header />
      <NavBar />
      <div className="flex h-[847px] shrink-0">
        <Sidebar />
        <div className="w-[5px] shrink-0 border-x border-black bg-[#d4d4d4]" />
        <PlantView />
        <div className="flex flex-1 flex-col border-l border-[#555]">
          <div className="flex h-[486px] shrink-0 border-b border-black">
            <Legend />
            <Tabs />
          </div>
          <CoilTable />
        </div>
      </div>
      <MessageBar />
      <BottomBar />
    </div>
  );
}
